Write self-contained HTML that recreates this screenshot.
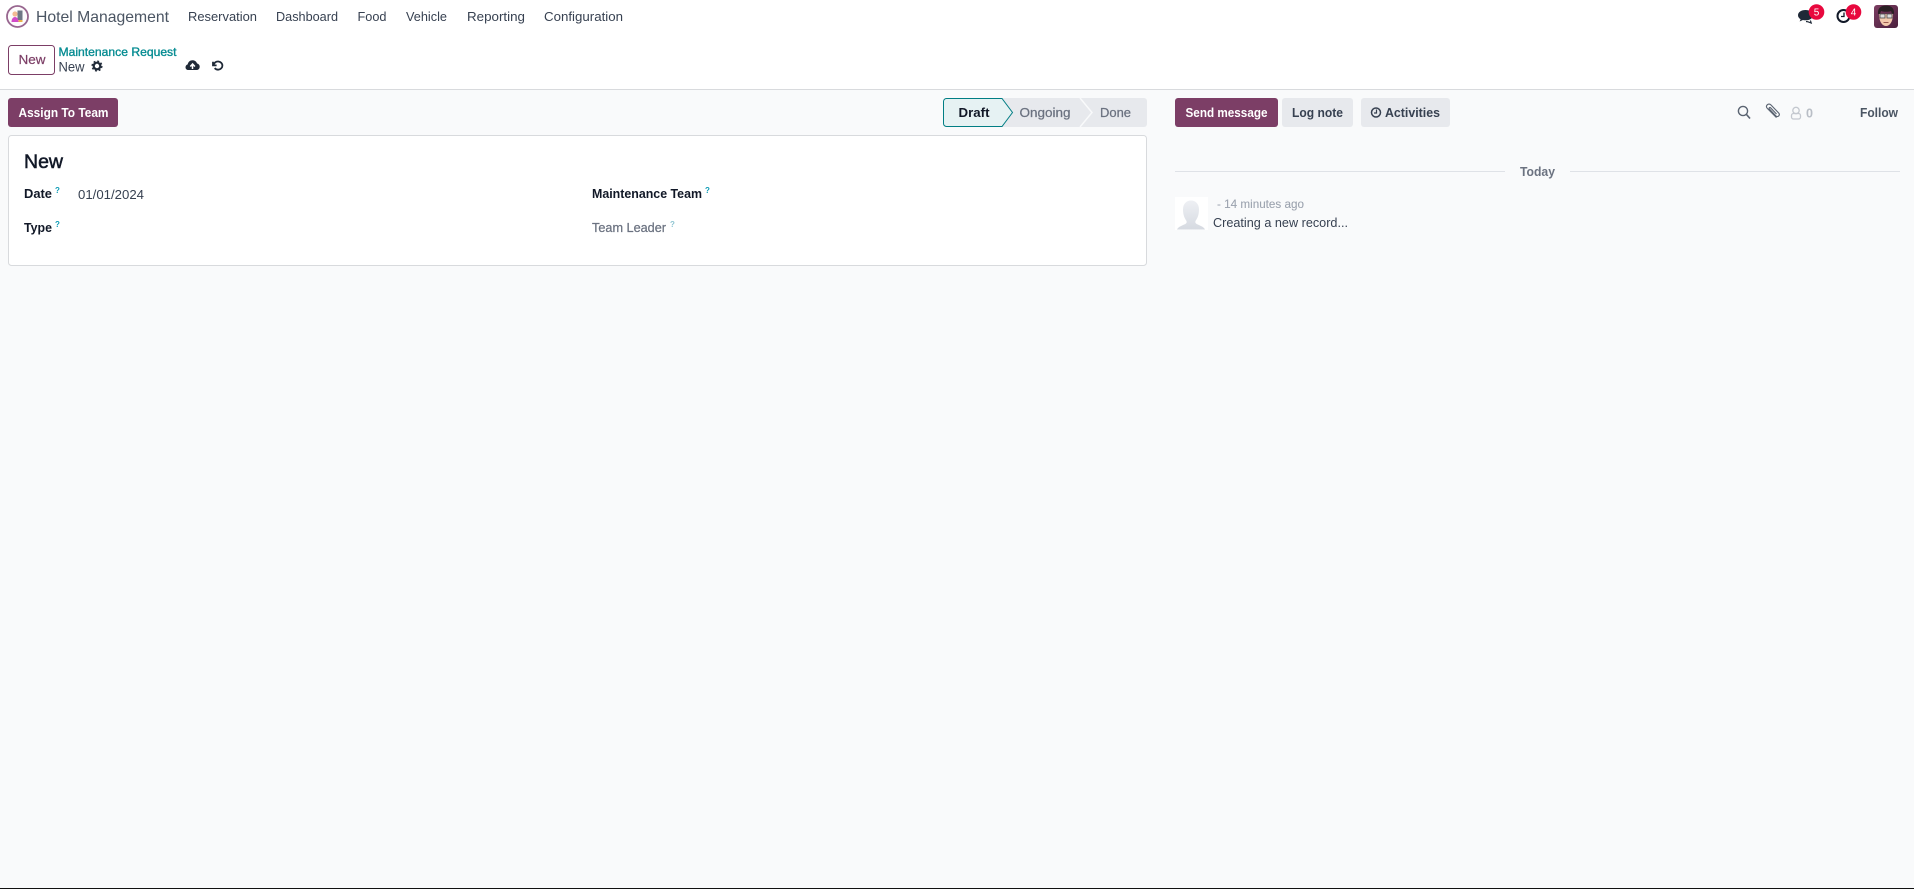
<!DOCTYPE html>
<html lang="en">
<head>
<meta charset="utf-8">
<title>Hotel Management - Maintenance Request</title>
<style>
html,body{margin:0;padding:0;width:1914px;height:889px;overflow:hidden;background:#f9fafb}
svg{display:block}
text{font-family:"Liberation Sans",sans-serif;font-size:13px;fill:#374151}
.b{font-weight:700}
.nav{fill:#374151}
</style>
</head>
<body>
<svg xmlns="http://www.w3.org/2000/svg" width="1914" height="889" viewBox="0 0 1914 889">
  <defs>
    <linearGradient id="av" x1="0" y1="0" x2="1" y2="1"><stop offset="0" stop-color="#7c3e62"/><stop offset="1" stop-color="#4a1f3c"/></linearGradient>
    <linearGradient id="sil" x1="0" y1="0" x2="0" y2="1"><stop offset="0" stop-color="#eef0f4"/><stop offset="1" stop-color="#d6dae1"/></linearGradient>
  </defs>
  <rect width="1914" height="889" fill="#f9fafb"/>
  <!-- top header -->
  <rect width="1914" height="89" fill="#fff"/>
  <rect y="89" width="1914" height="1" fill="#d8dadd"/>
  <!-- logo -->
  <circle cx="17.500" cy="16.500" r="10.500" fill="#fdfbfc" stroke="#98668f" stroke-width="1.800"/>
  <rect x="17.500" y="10.500" width="5" height="9.500" fill="#6f7785"/>
  <circle cx="15" cy="14" r="2.600" fill="#f2bb94"/>
  <path d="M11.500 22c0-3 1.500-5 3.500-5s3.500 2 3.500 5z" fill="#d24ac8"/>
  <rect x="18.500" y="20" width="4" height="2" fill="#e9b04b"/>
  <text x="36" y="22" textLength="133" lengthAdjust="spacingAndGlyphs" style="font-size:16px;fill:#4b5563">Hotel Management</text>
  <!-- nav -->
  <text class="nav" x="188" y="21" textLength="69" lengthAdjust="spacingAndGlyphs">Reservation</text>
  <text class="nav" x="276" y="21" textLength="62" lengthAdjust="spacingAndGlyphs">Dashboard</text>
  <text class="nav" x="357.500" y="21" textLength="29" lengthAdjust="spacingAndGlyphs">Food</text>
  <text class="nav" x="406" y="21" textLength="41" lengthAdjust="spacingAndGlyphs">Vehicle</text>
  <text class="nav" x="467" y="21" textLength="58" lengthAdjust="spacingAndGlyphs">Reporting</text>
  <text class="nav" x="544" y="21" textLength="79" lengthAdjust="spacingAndGlyphs">Configuration</text>
  <!-- systray -->
  <path d="M1805.500 10c-4.400 0-7.500 2.300-7.500 5.200 0 1.700 1 3.100 2.600 4l-1 2.300 3.300-1.500c.8.200 1.700.3 2.600.3 4.400 0 7.500-2.200 7.500-5.100s-3.100-5.200-7.500-5.200z" fill="#1f2937"/>
  <path d="M1806 21.500l2 .3 3.200 1.200-.8-2.500" fill="none" stroke="#1f2937" stroke-width="1.200"/>
  <circle cx="1816.500" cy="12" r="7.800" fill="#e8083e"/>
  <text x="1816.500" y="15.500" text-anchor="middle" style="font-size:10px;fill:#fff">5</text>
  <circle cx="1843.500" cy="16" r="6" fill="none" stroke="#111827" stroke-width="2"/>
  <path d="M1844 12.500v4h-3" fill="none" stroke="#111827" stroke-width="1.300"/>
  <circle cx="1853.500" cy="12" r="7.800" fill="#e8083e"/>
  <text x="1853.500" y="15.500" text-anchor="middle" style="font-size:10px;fill:#fff">4</text>
  <!-- user avatar -->
  <rect x="1874" y="5" width="24" height="23" rx="3" fill="url(#av)"/>
  <path d="M1879 14c0 8 3.500 12 7 12s7-4 7-12z" fill="#f3c9ac"/>
  <path d="M1878 14c-.5-6 3-8.500 8-8.500s8.500 2.500 8 8.500l-2-.5-1-2.500c-3 1-7 1-10 0l-1 3z" fill="#2a2024"/>
  <rect x="1880" y="14" width="5" height="4" fill="#dcdcdc" stroke="#4b4b4b" stroke-width=".8"/>
  <rect x="1887" y="14" width="5" height="4" fill="#dcdcdc" stroke="#4b4b4b" stroke-width=".8"/>
  <path d="M1883.500 22.500h5" stroke="#9a5a50" stroke-width="1"/>
  <!-- control panel -->
  <rect x="8.500" y="45.500" width="46" height="29" rx="3" fill="#fff" stroke="#7c3e66"/>
  <text x="18.500" y="64" textLength="27" lengthAdjust="spacingAndGlyphs" style="fill:#7c3e66;stroke:#7c3e66;stroke-width:.2">New</text>
  <text x="58.500" y="56" textLength="118" lengthAdjust="spacingAndGlyphs" style="font-size:12px;fill:#068c92;stroke:#068c92;stroke-width:.35">Maintenance Request</text>
  <text x="58.500" y="71.500" textLength="26" lengthAdjust="spacingAndGlyphs" style="font-size:14px">New</text>
  <!-- gear -->
  <circle cx="97" cy="66" r="3.300" fill="none" stroke="#1f2937" stroke-width="2.200"/>
  <circle cx="97" cy="66" r="4.900" fill="none" stroke="#1f2937" stroke-width="1.300" stroke-dasharray="2 1.850"/>
  <!-- cloud upload -->
  <path d="M188.500 70c-1.800 0-3-1.200-3-2.800 0-1.400 1-2.500 2.200-2.800.4-2.500 2.400-4.200 4.800-4.200 2.200 0 4 1.300 4.600 3.300 1.500.3 2.600 1.600 2.600 3.100 0 2-1.300 3.400-3.100 3.400z" fill="#1f2937"/>
  <path d="M192.500 69v-4.500M190.300 66.500l2.300-2.500 2.300 2.500" fill="none" stroke="#fff" stroke-width="1.500"/>
  <!-- undo -->
  <path d="M213 61.800v3.600h3.600" fill="none" stroke="#1f2937" stroke-width="1.800"/>
  <path d="M213.400 65c1-2.500 3-3.700 5-3.500 2.400.2 4 2.100 4 4.100s-1.900 4.100-4.200 4.100c-1.500 0-2.700-.6-3.500-1.600" fill="none" stroke="#1f2937" stroke-width="1.800"/>
  <!-- assign -->
  <rect x="8" y="98" width="110" height="29" rx="3" fill="#7c3e66"/>
  <text x="18.500" y="117" class="b" textLength="90" lengthAdjust="spacingAndGlyphs" style="fill:#fff">Assign To Team</text>
  <!-- status bar -->
  <path d="M946 98h198a3 3 0 0 1 3 3v23a3 3 0 0 1-3 3H946z" fill="#e7e9ed"/>
  <path d="M1080 98l12 14.500-12 14.500" fill="none" stroke="#f9fafb" stroke-width="1.500"/>
  <path d="M946.500 98.500H1002l10.500 14-10.500 14h-55.500a3 3 0 0 1-3-3v-22a3 3 0 0 1 3-3z" fill="#e6f2f3" stroke="#017e84"/>
  <text x="958.500" y="117" class="b" textLength="31" lengthAdjust="spacingAndGlyphs" style="fill:#111827">Draft</text>
  <text x="1019.500" y="117" textLength="51" lengthAdjust="spacingAndGlyphs" style="fill:#6b7280;stroke:#6b7280;stroke-width:.25">Ongoing</text>
  <text x="1100" y="117" textLength="31" lengthAdjust="spacingAndGlyphs" style="fill:#6b7280;stroke:#6b7280;stroke-width:.25">Done</text>
  <!-- card -->
  <rect x="8.500" y="135.500" width="1138" height="130" rx="3" fill="#fff" stroke="#d8dadd"/>
  <text x="24" y="168" textLength="39" lengthAdjust="spacingAndGlyphs" style="font-size:19px;fill:#111827;stroke:#111827;stroke-width:.5">New</text>
  <text x="24" y="198" class="b" textLength="28" lengthAdjust="spacingAndGlyphs" style="fill:#111827">Date</text>
  <text x="55" y="193" class="b" style="font-size:8px;fill:#0d9bb5">?</text>
  <text x="78" y="199" textLength="66" lengthAdjust="spacingAndGlyphs">01/01/2024</text>
  <text x="24" y="232" class="b" textLength="28" lengthAdjust="spacingAndGlyphs" style="fill:#111827">Type</text>
  <text x="55" y="227" class="b" style="font-size:8px;fill:#0d9bb5">?</text>
  <text x="592" y="198" class="b" textLength="110" lengthAdjust="spacingAndGlyphs" style="fill:#111827">Maintenance Team</text>
  <text x="705" y="193" class="b" style="font-size:8px;fill:#0d9bb5">?</text>
  <text x="592" y="232" textLength="74" lengthAdjust="spacingAndGlyphs" style="fill:#6b7280;stroke:#6b7280;stroke-width:.25">Team Leader</text>
  <text x="670" y="227" class="b" style="font-size:8px;fill:#8fc5d2">?</text>
  <!-- chatter buttons -->
  <rect x="1175" y="98" width="103" height="29" rx="3" fill="#7c3e66"/>
  <text x="1185.500" y="117" class="b" textLength="82" lengthAdjust="spacingAndGlyphs" style="fill:#fff">Send message</text>
  <rect x="1282" y="98" width="71" height="29" rx="3" fill="#e7e9ed"/>
  <text x="1292" y="117" class="b" textLength="51" lengthAdjust="spacingAndGlyphs">Log note</text>
  <rect x="1361" y="98" width="89" height="29" rx="3" fill="#e7e9ed"/>
  <circle cx="1376" cy="112.500" r="4.500" fill="none" stroke="#374151" stroke-width="1.500"/>
  <path d="M1376.500 109.500v3.500h-2.500" fill="none" stroke="#374151" stroke-width="1.200"/>
  <text x="1385" y="117" class="b" textLength="55" lengthAdjust="spacingAndGlyphs">Activities</text>
  <!-- chatter topbar -->
  <circle cx="1743" cy="111" r="4.600" fill="none" stroke="#5b6472" stroke-width="1.400"/>
  <path d="M1746.500 114.500l3.500 4" stroke="#5b6472" stroke-width="1.700"/>
  <path d="M1776.500 117.600l-9.200-9.200c-1.700-1.800-.5-3.300.2-3.800 1-.7 2.400-.7 3.500.4l7.700 8c1.900 2.100-1 4.700-2.700 3l-6.600-7c-.8-.9.300-2 1.200-1.200l5.900 6.200" fill="none" stroke="#5b6472" stroke-width="1.150"/>
  <circle cx="1796" cy="110.500" r="3.200" fill="none" stroke="#c4c8cf" stroke-width="1.300"/>
  <rect x="1791.500" y="113.500" width="9" height="5.500" rx="2" fill="none" stroke="#c4c8cf" stroke-width="1.300"/>
  <text x="1806" y="117.500" class="b" textLength="7" lengthAdjust="spacingAndGlyphs" style="fill:#b9bec6">0</text>
  <text x="1860" y="117" class="b" textLength="38" lengthAdjust="spacingAndGlyphs" style="fill:#4b5563">Follow</text>
  <!-- date separator -->
  <rect x="1175" y="171" width="330" height="1" fill="#dfe2e7"/>
  <rect x="1570" y="171" width="330" height="1" fill="#dfe2e7"/>
  <text x="1520" y="176" class="b" textLength="35" lengthAdjust="spacingAndGlyphs" style="fill:#6b7280">Today</text>
  <!-- message -->
  <rect x="1175" y="197" width="33" height="33" fill="#fff"/>
  <path d="M1177 229.500c1-3 7-4.500 9-6 1-1 .8-2 .2-3-1.800-2.500-3.200-6-3.200-11 0-5.500 3.300-9 8-9s8 3.500 8 9c0 5-1.400 8.500-3.200 11-.6 1-.8 2 .2 3 2 1.500 8 3 9 6z" fill="url(#sil)"/>
  <text x="1217" y="208" textLength="87" lengthAdjust="spacingAndGlyphs" style="font-size:12px;fill:#9ca3af;stroke:#9ca3af;stroke-width:.1">- 14 minutes ago</text>
  <text x="1213" y="227" textLength="135" lengthAdjust="spacingAndGlyphs">Creating a new record...</text>
  <!-- bottom edge -->
  <rect y="888" width="1914" height="1" fill="#111"/>
</svg>
</body>
</html>
